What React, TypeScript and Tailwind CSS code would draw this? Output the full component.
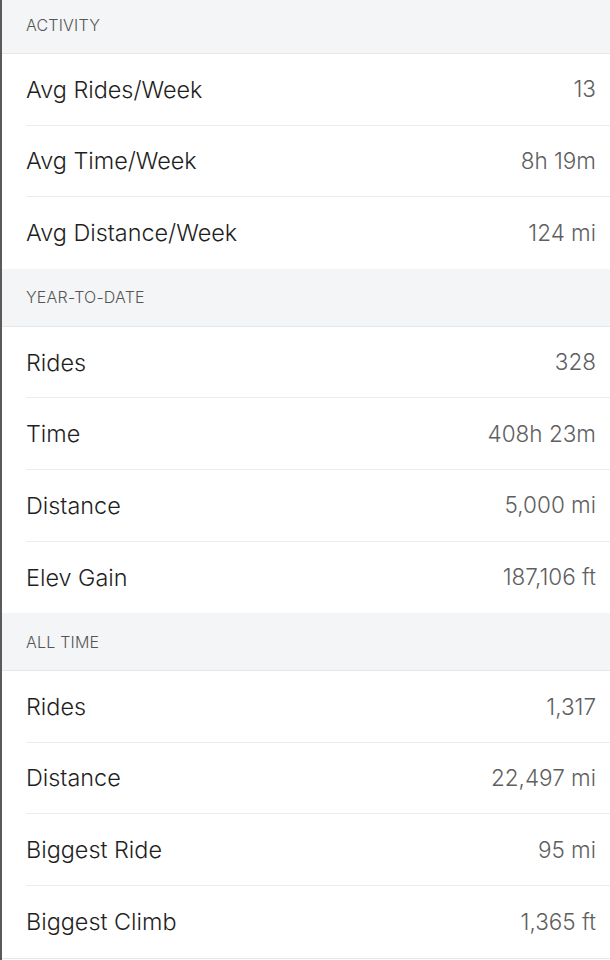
import React from "react";

type Row = { label: string; value: string };

const sections: { title: string; rows: Row[] }[] = [
  {
    title: "ACTIVITY",
    rows: [
      { label: "Avg Rides/Week", value: "13" },
      { label: "Avg Time/Week", value: "8h 19m" },
      { label: "Avg Distance/Week", value: "124 mi" },
    ],
  },
  {
    title: "YEAR-TO-DATE",
    rows: [
      { label: "Rides", value: "328" },
      { label: "Time", value: "408h 23m" },
      { label: "Distance", value: "5,000 mi" },
      { label: "Elev Gain", value: "187,106 ft" },
    ],
  },
  {
    title: "ALL TIME",
    rows: [
      { label: "Rides", value: "1,317" },
      { label: "Distance", value: "22,497 mi" },
      { label: "Biggest Ride", value: "95 mi" },
      { label: "Biggest Climb", value: "1,365 ft" },
    ],
  },
];

export default function App() {
  return (
    <div
      className="w-[610px] h-[960px] overflow-hidden bg-white border-l-2 border-[#5a5a5a]"
      style={{ fontFamily: "Inter, 'Liberation Sans', Arial, sans-serif" }}
    >
      {sections.map((s, i) => (
        <div key={s.title}>
          <div
            className={`flex items-center bg-[#f4f5f7] border-b border-[#e6e7e9] pl-[24px] ${
              i === 0 ? "h-[54px] pb-[4px]" : "h-[58px]"
            }`}
          >
            <span className="text-[16px] font-[350] text-[#555] tracking-[0.2px]">{s.title}</span>
          </div>
          <div className="pl-[24px]">
            {s.rows.map((r, j) => (
              <div
                key={r.label}
                className={`flex items-center justify-between h-[71.6px] pr-[14px] ${
                  j < s.rows.length - 1 ? "border-b border-[#ececee]" : ""
                }`}
              >
                <span className="text-[23.4px] font-[350] text-[#1f1f1f]">{r.label}</span>
                <span className="text-[22.5px] font-[300] text-[#5f5f5f]">{r.value}</span>
              </div>
            ))}
          </div>
        </div>
      ))}
      <div className="border-t border-[#e6e7e9]" />
    </div>
  );
}
